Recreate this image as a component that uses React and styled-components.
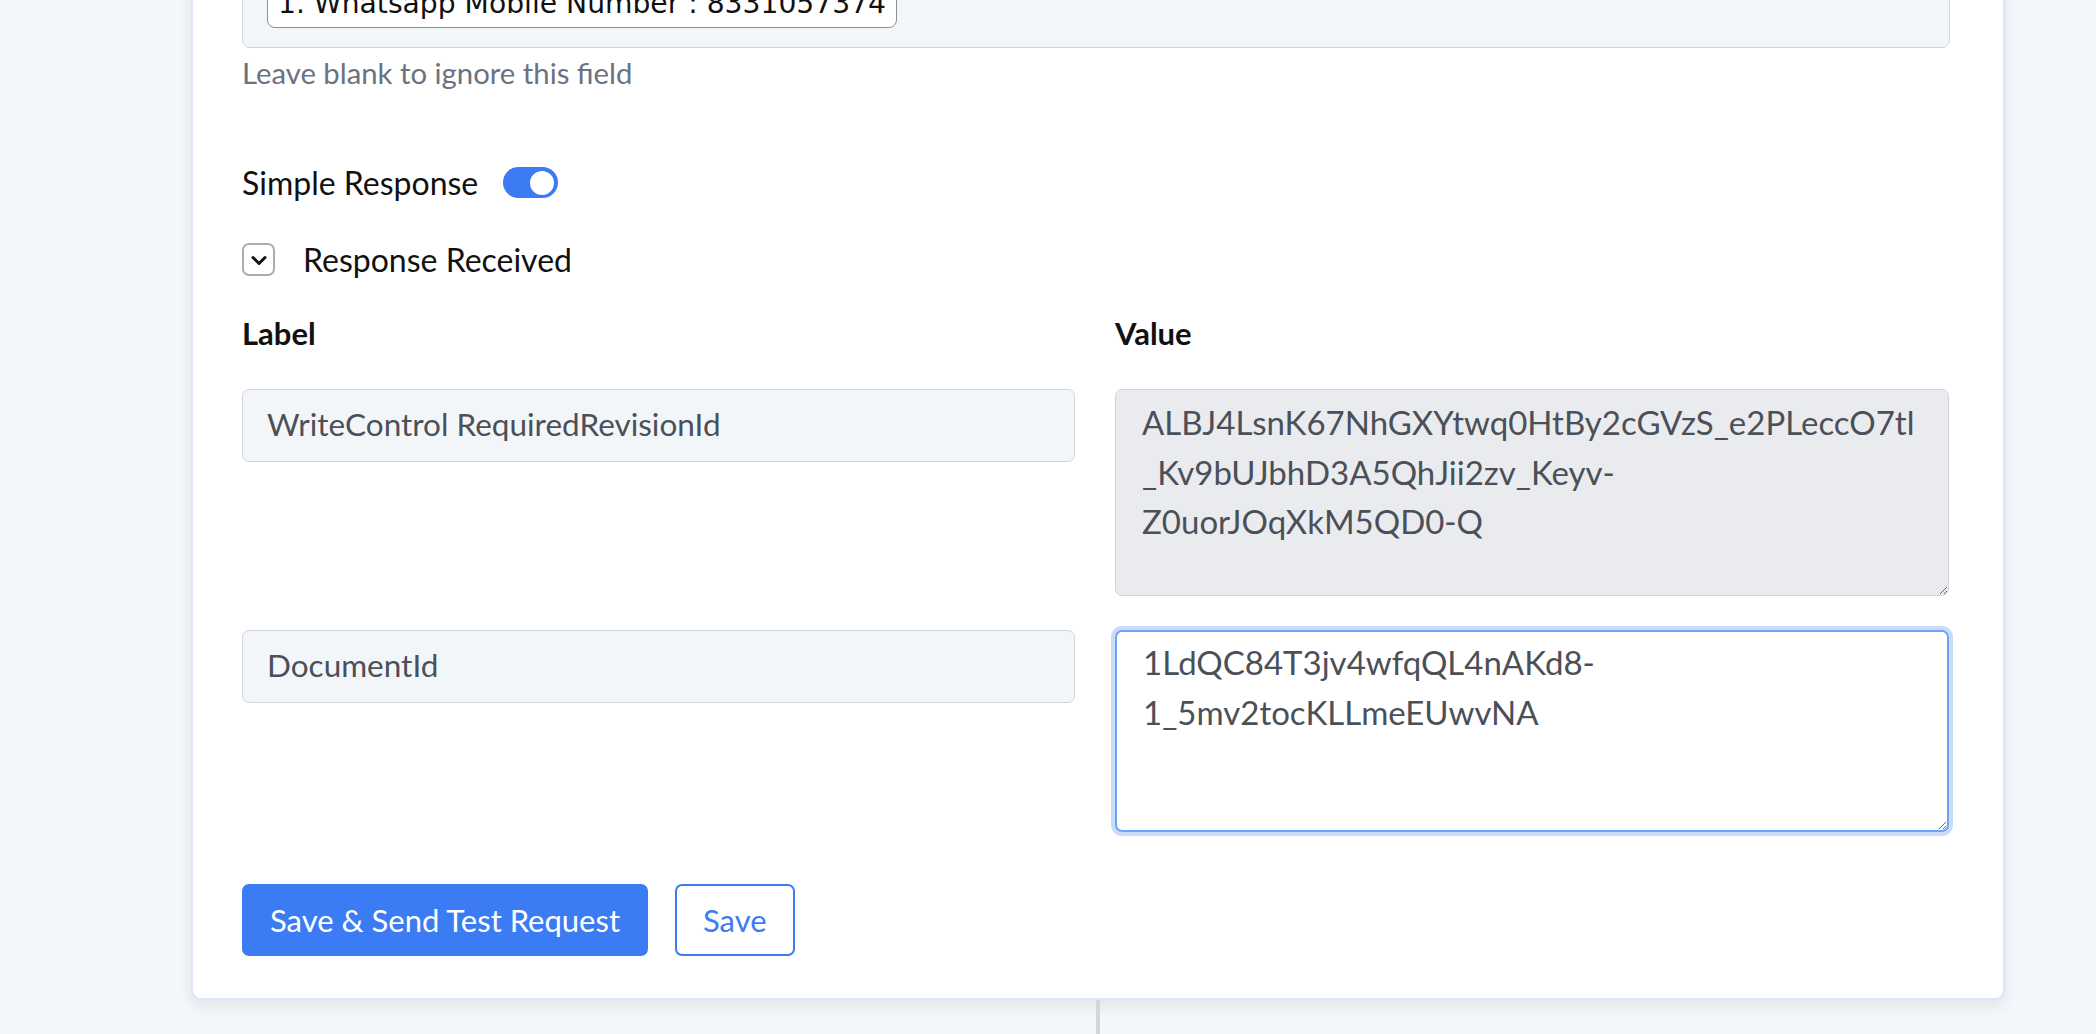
import React, { useState } from 'react'
import styled, { createGlobalStyle } from 'styled-components'

const GlobalStyle = createGlobalStyle`
  html, body {
    margin: 0;
    padding: 0;
    height: 100%;
    overflow: hidden;
    background: #f3f6fa;
  }
  body {
    font-family: Lato, "Open Sans", sans-serif;
    color: #111827;
  }
`

const Page = styled.div`
  padding-left: 191px;
`

const Column = styled.div`
  width: 1814px;
  display: flex;
  flex-direction: column;
  align-items: center;
`

const Card = styled.div`
  box-sizing: border-box;
  width: 100%;
  margin-top: -41px;
  padding: 0 53px 42px 49px;
  background: #fff;
  border: 2px solid #dde6fb;
  border-radius: 10px;
  box-shadow: 0 6px 14px rgba(30, 41, 59, 0.08);
`

const Connector = styled.div`
  width: 4px;
  height: 60px;
  background: #d3d6db;
`

const FieldBox = styled.div`
  padding: 20px 24px 19px;
  background: #f3f6f9;
  border: 1px solid #d1d5db;
  border-radius: 8px;
`

const Tag = styled.span`
  display: inline-block;
  padding: 4px 10px 6px;
  font-family: "DejaVu Sans", sans-serif;
  font-size: 28.2px;
  line-height: 34px;
  color: #111;
  background: #fff;
  border: 1.5px solid #8e8e8e;
  border-radius: 8px;
`

const Hint = styled.div`
  margin-top: 8px;
  font-size: 29.3px;
  line-height: 34px;
  color: #6b7280;
`

const ToggleRow = styled.div`
  display: flex;
  align-items: center;
  gap: 25px;
  height: 31px;
  margin-top: 77px;
  font-size: 32px;
  color: #111;
`

const Switch = styled.button`
  position: relative;
  width: 55px;
  height: 31px;
  padding: 0;
  border: none;
  border-radius: 16px;
  background: ${({ on }) => (on ? '#3b7cf5' : '#d1d5db')};
  cursor: pointer;

  &::after {
    content: '';
    position: absolute;
    top: 3.5px;
    left: ${({ on }) => (on ? '27px' : '4px')};
    width: 24px;
    height: 24px;
    border-radius: 50%;
    background: #fff;
  }
`

const CollapseRow = styled.div`
  display: flex;
  align-items: center;
  gap: 28px;
  height: 33px;
  margin-top: 45px;
  font-size: 32px;
  color: #111;
`

const ChevronBox = styled.span`
  box-sizing: border-box;
  display: flex;
  align-items: center;
  justify-content: center;
  width: 33px;
  height: 33px;
  border: 2px solid #a9aeb6;
  border-radius: 7px;
  color: #111;
`

const Grid = styled.div`
  display: grid;
  grid-template-columns: 833px 834px;
  column-gap: 40px;
  row-gap: 34px;
  align-items: start;
  margin-top: 39px;
`

const HeadCell = styled.div`
  font-size: 31px;
  font-weight: 700;
  line-height: 36px;
  color: #111;
  margin-bottom: 4px;
`

const TextInput = styled.input`
  box-sizing: border-box;
  width: 100%;
  height: 73px;
  padding: 0 24px 3px;
  font-family: inherit;
  font-size: 31.5px;
  color: #4b5058;
  background: #f3f6f9;
  border: 1.5px solid #d1d5db;
  border-radius: 7px;
  outline: none;
`

const TextArea = styled.textarea`
  box-sizing: border-box;
  display: block;
  width: 100%;
  height: ${({ h }) => h}px;
  padding: ${({ focused }) => (focused ? '6px' : '8px')} 26px 6px;
  font-family: inherit;
  font-size: 33px;
  line-height: 49.5px;
  color: #4b5058;
  background: ${({ disabled }) => (disabled ? '#e9ebef' : '#fff')};
  border: ${({ focused }) => (focused ? '2px solid #6ea3f7' : '1.5px solid #d1d5db')};
  border-radius: 7px;
  box-shadow: ${({ focused }) => (focused ? '0 0 0 4px #cadcfc' : 'none')};
  outline: none;
`

const Actions = styled.div`
  display: flex;
  gap: 27px;
  margin-top: 52px;
`

const Button = styled.button`
  box-sizing: border-box;
  height: 72px;
  padding: 0 26px;
  font-family: inherit;
  font-size: 31px;
  color: ${({ primary }) => (primary ? '#fff' : '#3b7cf5')};
  background: ${({ primary }) => (primary ? '#3b7cf5' : '#fff')};
  border: 2px solid #3b7cf5;
  border-radius: 7px;
  cursor: pointer;
`

const rows = [
  {
    label: 'WriteControl RequiredRevisionId',
    value: 'ALBJ4LsnK67NhGXYtwq0HtBy2cGVzS_e2PLeccO7tl\n_Kv9bUJbhD3A5QhJii2zv_Keyv-\nZ0uorJOqXkM5QD0-Q',
    disabled: true,
    h: 207,
  },
  {
    label: 'DocumentId',
    value: '1LdQC84T3jv4wfqQL4nAKd8-\n1_5mv2tocKLLmeEUwvNA',
    focused: true,
    h: 202,
  },
]

export default function App() {
  const [simple, setSimple] = useState(true)

  return (
    <Page>
      <GlobalStyle />
      <Column>
        <Card>
          <FieldBox>
            <Tag>1. Whatsapp Mobile Number : 8331057374</Tag>
          </FieldBox>
          <Hint>Leave blank to ignore this field</Hint>

          <ToggleRow>
            Simple Response
            <Switch on={simple ? 1 : 0} onClick={() => setSimple(v => !v)} aria-label="Simple Response" />
          </ToggleRow>

          <CollapseRow>
            <ChevronBox>
              <svg width="24" height="24" viewBox="0 0 24 24" fill="none" stroke="currentColor" strokeWidth="3" strokeLinecap="round" strokeLinejoin="round">
                <path d="M6 9.5l6 6 6-6" />
              </svg>
            </ChevronBox>
            Response Received
          </CollapseRow>

          <Grid>
            <HeadCell>Label</HeadCell>
            <HeadCell>Value</HeadCell>
            {rows.map(r => (
              <React.Fragment key={r.label}>
                <TextInput defaultValue={r.label} readOnly />
                <TextArea
                  h={r.h}
                  disabled={r.disabled}
                  focused={r.focused ? 1 : 0}
                  defaultValue={r.value}
                />
              </React.Fragment>
            ))}
          </Grid>

          <Actions>
            <Button primary={1}>Save &amp; Send Test Request</Button>
            <Button>Save</Button>
          </Actions>
        </Card>
        <Connector />
      </Column>
    </Page>
  )
}
